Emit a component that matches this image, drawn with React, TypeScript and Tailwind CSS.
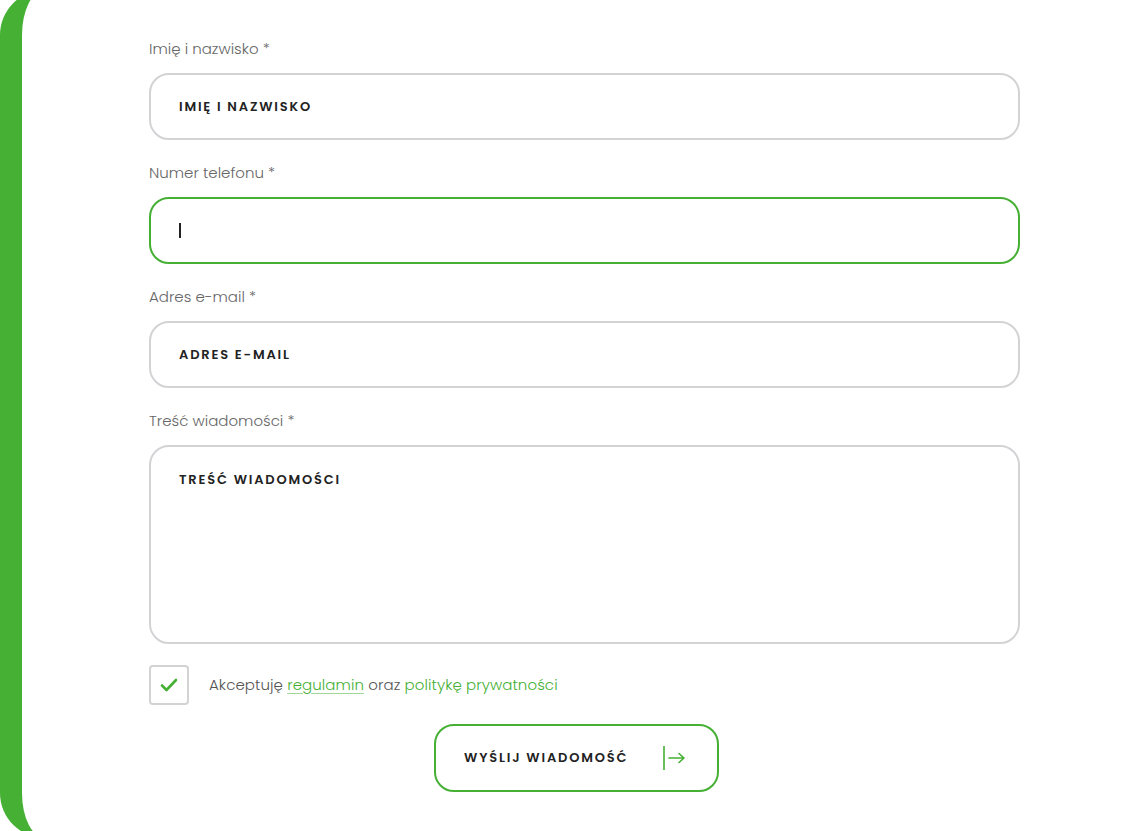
const GREEN = '#46b035'

function Field({ label, placeholder }: { label: string; placeholder: string }) {
  return (
    <div className="flex flex-col">
      <label className="text-[15px] leading-[20px] font-light text-[#666] mb-[14px]">{label}</label>
      <div className="h-[67px] rounded-[20px] border-2 border-[#d3d3d6] flex items-center px-[28px]">
        <span className="text-[13px] font-semibold tracking-[0.14em] text-[#222]">{placeholder}</span>
      </div>
    </div>
  )
}

export default function App() {
  return (
    <div
      className="w-[1139px] h-[831px] overflow-hidden bg-white"
      style={{ fontFamily: 'Poppins, "Noto Sans", Inter, sans-serif' }}
    >
      <div className="-mt-[10px] h-[848px] w-[1300px] rounded-l-[45px] border-l-[22px] border-[#46b035] bg-white">
        <div className="pt-[49px] pl-[127px] w-[998px] flex flex-col gap-[23px]">
          <Field label="Imię i nazwisko *" placeholder="IMIĘ I NAZWISKO" />

          <div className="flex flex-col">
            <label className="text-[15px] leading-[20px] font-light text-[#666] mb-[14px]">Numer telefonu *</label>
            <div className="h-[67px] rounded-[20px] border-2 border-[#46b035] flex items-center px-[28px]">
              <span className="w-[2px] h-[15px] bg-[#222]" />
            </div>
          </div>

          <Field label="Adres e-mail *" placeholder="ADRES E-MAIL" />

          <div className="flex flex-col">
            <label className="text-[15px] leading-[20px] font-light text-[#666] mb-[14px]">Treść wiadomości *</label>
            <div className="h-[199px] rounded-[20px] border-2 border-[#d3d3d6] px-[28px] pt-[20px]">
              <span className="text-[13px] font-semibold tracking-[0.14em] text-[#222]">TREŚĆ WIADOMOŚCI</span>
            </div>
          </div>
        </div>

        <div className="pl-[127px] mt-[21px] flex items-center gap-[20px]">
          <div className="w-[40px] h-[40px] rounded-[4px] border-2 border-[#d3d3d6] flex items-center justify-center">
            <svg width="18" height="14" viewBox="0 0 18 14" fill="none">
              <path d="M2 7.5l4.5 4.5L16 2" stroke={GREEN} strokeWidth="2.6" strokeLinecap="round" strokeLinejoin="round" />
            </svg>
          </div>
          <p className="text-[15px] font-light text-[#555] tracking-[0.005em]">
            Akceptuję{' '}
            <span className="text-[#46b035] underline decoration-[#9fd69a] underline-offset-[3px]">regulamin</span>{' '}
            oraz <span className="text-[#46b035]">politykę prywatności</span>
          </p>
        </div>

        <div className="pl-[412px] mt-[19px]">
          <button className="w-[285px] h-[68px] rounded-[20px] border-2 border-[#46b035] flex items-center pl-[28px] bg-white">
            <span className="text-[13px] font-semibold tracking-[0.14em] text-[#222]">WYŚLIJ WIADOMOŚĆ</span>
            <svg className="ml-[35px]" width="24" height="26" viewBox="0 0 24 26" fill="none">
              <path d="M1 1v24" stroke={GREEN} strokeWidth="1.6" />
              <path d="M6 13h15M16 8.5l5 4.5-5 4.5" stroke={GREEN} strokeWidth="1.6" strokeLinecap="round" strokeLinejoin="round" />
            </svg>
          </button>
        </div>
      </div>
    </div>
  )
}
